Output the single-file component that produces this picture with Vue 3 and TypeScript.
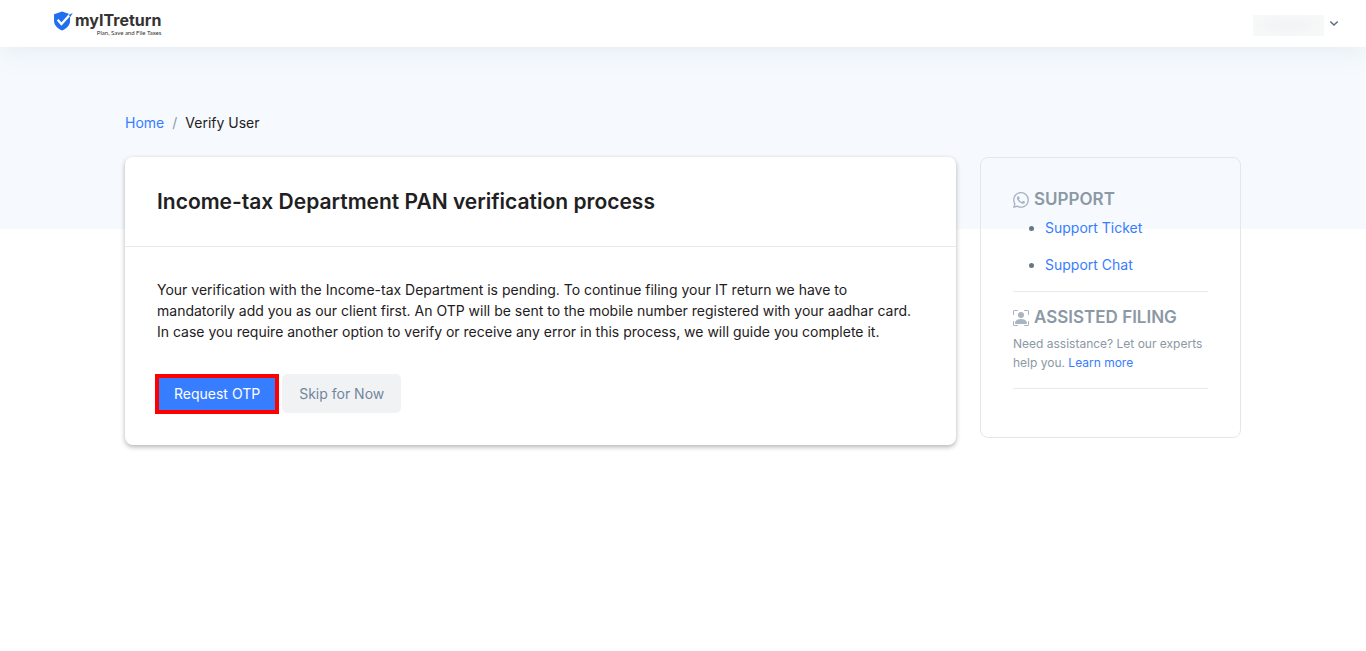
<script setup lang="ts">
import { ref } from 'vue'

interface SupportLink {
  label: string
  href: string
}

const supportLinks: SupportLink[] = [
  { label: 'Support Ticket', href: '#ticket' },
  { label: 'Support Chat', href: '#chat' },
]

const menuOpen = ref(false)
</script>

<template>
  <header class="topbar">
    <a class="brand" href="#" aria-label="myITreturn home">
      <svg class="brand-mark" viewBox="0 0 19 19" aria-hidden="true">
        <path fill="#1f6fee" d="M8.6.4 1 3v6.2c0 4.3 3.2 7.4 7.6 9.4 4.4-2 7.6-5.1 7.6-9.4V3z" />
        <path fill="none" stroke="#fff" stroke-width="2.2" d="m4.4 8.4 3.6 4L16.4 3" />
        <path fill="#1f6fee" d="m15 3.8 3.8-2.2-2.3 4z" />
      </svg>
      <span class="brand-text">
        <span class="brand-name">myITreturn</span>
        <span class="brand-tag">Plan, Save and File Taxes</span>
      </span>
    </a>
    <button class="account" type="button" aria-label="Account menu" :aria-expanded="menuOpen" @click="menuOpen = !menuOpen">
      <span class="account-name"></span>
      <svg class="chevron" viewBox="0 0 10 10" aria-hidden="true">
        <path d="m1.300 2.500 3.700 3.500 3.700-3.500" fill="none" stroke="#5a6b85" stroke-width="1.4" />
      </svg>
    </button>
  </header>

  <div class="page">
    <div class="container">
      <nav class="breadcrumb" aria-label="Breadcrumb">
        <a href="#home">Home</a>
        <span class="slash">/</span>
        <span>Verify User</span>
      </nav>

      <div class="columns">
        <main class="card">
          <div class="card-head">
            <h1>Income-tax Department PAN verification process</h1>
          </div>
          <div class="card-body">
            <p>
              Your verification with the Income-tax Department is pending. To continue filing your IT return we have to
              mandatorily add you as our client first. An OTP will be sent to the mobile number registered with your
              aadhar card. In case you require another option to verify or receive any error in this process, we will
              guide you complete it.
            </p>
            <div class="actions">
              <button class="btn primary" type="button">Request OTP</button>
              <button class="btn secondary" type="button">Skip for Now</button>
            </div>
          </div>
        </main>

        <aside class="side">
          <section>
            <h2>
              <svg viewBox="0 0 16 16" aria-hidden="true">
                <path d="M13.601 2.326A7.854 7.854 0 0 0 7.994 0C3.627 0 .068 3.558.064 7.926c0 1.399.366 2.760 1.057 3.965L0 16l4.204-1.102a7.933 7.933 0 0 0 3.790.965h.004c4.368 0 7.926-3.558 7.930-7.930A7.898 7.898 0 0 0 13.600 2.326zM7.994 14.521a6.573 6.573 0 0 1-3.356-.920l-.240-.144-2.494.654.666-2.433-.156-.251a6.560 6.560 0 0 1-1.007-3.505c0-3.626 2.957-6.584 6.591-6.584a6.560 6.560 0 0 1 4.660 1.931 6.557 6.557 0 0 1 1.928 4.660c-.004 3.639-2.961 6.592-6.592 6.592zm3.615-4.934c-.197-.099-1.170-.578-1.353-.646-.182-.065-.315-.099-.445.099-.133.197-.513.646-.627.775-.114.133-.232.148-.430.050-.197-.100-.836-.308-1.592-.985-.590-.525-.985-1.175-1.103-1.372-.114-.198-.011-.304.088-.403.087-.088.197-.232.296-.346.100-.114.133-.198.198-.330.065-.134.034-.248-.015-.347-.050-.099-.445-1.076-.612-1.470-.160-.389-.323-.335-.445-.340-.114-.007-.247-.007-.380-.007a.729.729 0 0 0-.529.247c-.182.198-.691.677-.691 1.654 0 .977.710 1.916.810 2.049.098.133 1.394 2.132 3.383 2.992.470.205.840.326 1.129.418.475.152.904.129 1.246.080.380-.058 1.171-.480 1.338-.943.164-.464.164-.860.114-.943-.049-.084-.182-.133-.380-.232z" />
              </svg>
              SUPPORT
            </h2>
            <ul>
              <li v-for="link in supportLinks" :key="link.href">
                <a :href="link.href">{{ link.label }}</a>
              </li>
            </ul>
          </section>
          <section>
            <h2>
              <svg viewBox="0 0 16 16" aria-hidden="true">
                <path d="M1.500 1a.5.5 0 0 0-.5.5v3a.5.5 0 0 1-1 0v-3A1.500 1.500 0 0 1 1.500 0h3a.5.5 0 0 1 0 1zM11 .5a.5.5 0 0 1 .5-.5h3A1.500 1.500 0 0 1 16 1.500v3a.5.5 0 0 1-1 0v-3a.5.5 0 0 0-.5-.5h-3a.5.5 0 0 1-.5-.5M.5 11a.5.5 0 0 1 .5.5v3a.5.5 0 0 0 .5.5h3a.5.5 0 0 1 0 1h-3A1.500 1.500 0 0 1 0 14.500v-3a.5.5 0 0 1 .5-.5m15 0a.5.5 0 0 1 .5.5v3a1.500 1.500 0 0 1-1.500 1.500h-3a.5.5 0 0 1 0-1h3a.5.5 0 0 0 .5-.5v-3a.5.5 0 0 1 .5-.5" />
                <path d="M3 14s-1 0-1-1 1-4 6-4 6 3 6 4-1 1-1 1zm8-9a3 3 0 1 1-6 0 3 3 0 0 1 6 0" />
              </svg>
              ASSISTED FILING
            </h2>
            <p>Need assistance? Let our experts help&nbsp;you. <a href="#learn">Learn more</a></p>
          </section>
        </aside>
      </div>
    </div>
  </div>
</template>

<style>
body {
  background: #fff;
}
</style>

<style scoped>
* {
  box-sizing: border-box;
}

.topbar,
.page {
  font-family: Inter, "Liberation Sans", sans-serif;
  font-size: 14px;
  line-height: 21px;
  color: #1e2022;
}

.topbar {
  position: relative;
  display: flex;
  align-items: center;
  justify-content: space-between;
  height: 47px;
  padding: 0 27px 0 53px;
  background: #fff;
  box-shadow: 0 6px 24px rgba(140, 152, 164, 0.13);
}

a {
  color: #377dff;
  text-decoration: none;
}

.brand {
  display: flex;
  align-items: flex-start;
  gap: 2px;
  color: #333;
}

.brand-mark {
  width: 20px;
  height: 20px;
}

.brand-text {
  display: flex;
  flex-direction: column;
  align-items: flex-end;
}

.brand-name {
  font-size: 16px;
  font-weight: 700;
  line-height: 19px;
}

.brand-tag {
  font-family: Lato, sans-serif;
  font-size: 6px;
  line-height: 6px;
}

.account {
  display: flex;
  align-items: flex-start;
  gap: 5px;
  padding: 3px 0 0;
  border: 0;
  background: none;
}

.account-name {
  width: 71px;
  height: 21px;
  background: radial-gradient(ellipse, #f2f3f4, #f8f9f9);
}

.chevron {
  width: 10px;
  height: 10px;
  margin-top: 4px;
}

.page {
  background: linear-gradient(#f6faff, #f6faff) top / 100% 182px no-repeat;
  padding: 65px 0 48px;
}

.container {
  max-width: 1140px;
  margin: 0 auto;
  padding: 0 12px;
}

.breadcrumb {
  display: flex;
  gap: 8px;
  margin-bottom: 24px;
}

.slash {
  color: #8c98a4;
}

.columns {
  display: grid;
  grid-template-columns: minmax(0, 831fr) minmax(0, 261fr);
  gap: 24px;
  align-items: start;
}

.card {
  background: #fff;
  border-radius: 8px;
  box-shadow: 0 2px 5px rgba(0, 0, 0, 0.3);
}

.card-head {
  padding: 32px;
  border-bottom: 1px solid #e7eaec;
}

h1 {
  margin: 0;
  font-size: 21px;
  font-weight: 600;
  line-height: 25px;
}

.card-body {
  padding: 32px;
}

.card-body p {
  margin: 0 0 32px;
}

.actions {
  display: flex;
  align-items: center;
  gap: 5px;
}

.btn {
  height: 39px;
  padding: 0 17px;
  border: 0;
  border-radius: 5px;
  font-family: inherit;
  font-size: 14px;
  font-weight: 400;
}

.primary {
  height: 36px;
  padding: 0 15px;
  border: 2px solid #f00;
  border-radius: 0;
  outline: 2px solid #f00;
  background: #377dff;
  color: #fff;
}

.secondary {
  background: #f1f2f4;
  color: #71869d;
}

.side {
  padding: 32px;
  border: 1px solid #e4e7ea;
  border-radius: 8px;
}

.side section {
  padding-bottom: 16px;
  margin-bottom: 16px;
  border-bottom: 1px solid #e7eaec;
}

h2 {
  display: flex;
  align-items: center;
  gap: 5px;
  margin: 0 0 7px;
  font-size: 17px;
  font-weight: 600;
  line-height: 19px;
  color: #8c98a4;
}

h2 svg {
  width: 16px;
  height: 16px;
  fill: #a9b4c0;
}

ul {
  display: grid;
  gap: 16px;
  margin: 0;
  padding: 1px 0 0 32px;
  color: #677788;
}

.side p {
  margin: 0;
  font-size: 12px;
  line-height: 19px;
  color: #8c98a4;
}
</style>
